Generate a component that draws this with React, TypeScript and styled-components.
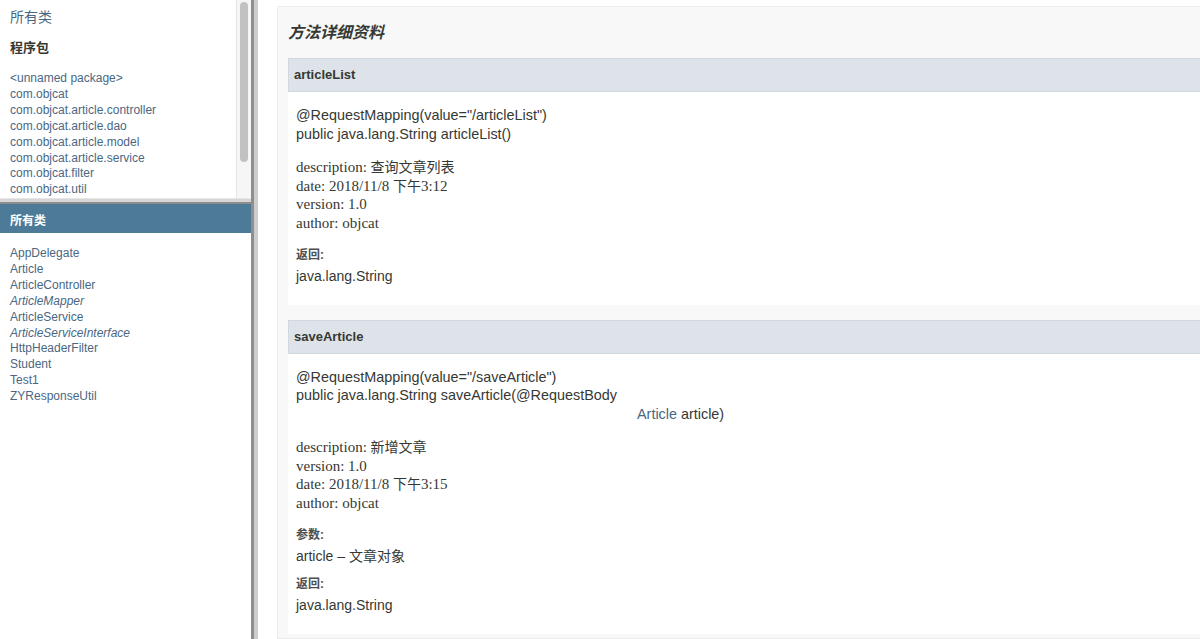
import React from "react";
import styled, { createGlobalStyle } from "styled-components";

const GlobalStyle = createGlobalStyle`
    html, body {
        margin: 0;
        padding: 0;
        background: #ffffff;
        overflow: hidden;
    }
    body {
        font-family: "Liberation Sans", Arial, "Noto Sans CJK SC", sans-serif;
        color: #353833;
        font-size: 14px;
    }
`;

const Page = styled.div`
    display: flex;
    width: 1200px;
    height: 639px;
    overflow: hidden;
`;

const LeftColumn = styled.div`
    width: 251px;
    display: flex;
    flex-direction: column;
    flex-shrink: 0;
`;

const PackageFrame = styled.div`
    height: 198px;
    display: flex;
    overflow: hidden;
`;

const PackageContent = styled.div`
    flex: 1;
    padding: 8px 0 0 10px;
`;

const AllClassesLink = styled.a`
    display: block;
    font-size: 14px;
    line-height: 18px;
    color: #4a6782;
    text-decoration: none;
`;

const IndexTitle = styled.h2`
    margin: 14px 0 0;
    font-size: 13px;
    line-height: 16px;
    font-weight: bold;
    color: #353833;
`;

const LinkList = styled.ul<{ $top: number }>`
    list-style: none;
    margin: ${(p) => p.$top}px 0 0;
    padding: 0;
    font-size: 12px;
    line-height: 15.9px;
`;

const LinkItem = styled.li<{ $italic?: boolean }>`
    color: #4a6782;
    font-style: ${(p) => (p.$italic ? "italic" : "normal")};
    white-space: nowrap;
`;

const ScrollTrack = styled.div`
    width: 15px;
    background: #f6f6f6;
    border-left: 1px solid #e4e4e4;
    box-sizing: border-box;
    display: flex;
    justify-content: center;
    padding-top: 2px;
`;

const ScrollThumb = styled.div`
    width: 8px;
    height: 160px;
    border-radius: 4px;
    background: #c2c2c2;
`;

const HSeparator = styled.div`
    height: 6px;
    box-sizing: border-box;
    background: #d6d6d6;
    border-top: 1px solid #e6e6e6;
    border-bottom: 2px solid #8c8c8c;
`;

const ClassFrame = styled.div`
    flex: 1;
`;

const Bar = styled.h1`
    margin: 0;
    height: 29px;
    box-sizing: border-box;
    padding: 10px 0 0 10px;
    background: #4d7a97;
    color: #ffffff;
    font-size: 12px;
    line-height: 14px;
    font-weight: bold;
`;

const ClassListWrap = styled.div`
    padding-left: 10px;
`;

const VSeparator = styled.div`
    width: 7px;
    flex-shrink: 0;
    box-sizing: border-box;
    background: #cdcdcd;
    border-left: 3px solid #8e8e8e;
`;

const ContentFrame = styled.div`
    flex: 1;
    overflow: hidden;
    padding: 6px 0 0 19px;
    background: #ffffff;
`;

const DetailPanel = styled.div`
    width: calc(100% + 40px);
    box-sizing: border-box;
    background: #f8f8f8;
    border: 1px solid #ededed;
    padding: 16px 0 4px 10px;
`;

const SectionTitle = styled.h3`
    margin: 0 0 15px;
    font-size: 16px;
    line-height: 20px;
    font-style: italic;
    font-weight: bold;
    color: #353833;
`;

const MethodBlock = styled.div`
    background: #ffffff;
    padding: 0 0 20px 8px;
    margin-bottom: 15px;

    &:last-child {
        margin-bottom: 0;
    }
`;

const MethodHeader = styled.h4`
    margin: 0 0 0 -8px;
    padding: 7px 5px;
    background: #dee3e9;
    border: 1px solid #d0d9e0;
    font-size: 13px;
    line-height: 18px;
    font-weight: bold;
    color: #353833;
`;

const Signature = styled.div`
    margin-top: 14px;
    font-size: 14.4px;
    line-height: 18.5px;
    white-space: nowrap;
`;

const ParamLine = styled.div<{ $indent: number }>`
    padding-left: ${(p) => p.$indent}px;
`;

const TypeLink = styled.span`
    color: #4a6782;
`;

const DocBlock = styled.div`
    margin-top: 15px;
    font-family: "Liberation Serif", "Times New Roman", "Noto Sans CJK SC", serif;
    font-size: 15px;
    line-height: 18.67px;
    color: #353833;
`;

const DocLine = styled.div`
    height: 18.67px;
`;

const Han = styled.span`
    font-size: 14px;
    line-height: 1;
`;

const TagList = styled.dl`
    margin: 0;
`;

const TagTerm = styled.dt`
    margin-top: 15px;
    font-size: 12px;
    line-height: 14px;
    font-weight: bold;
    color: #4e4e4e;

    & + dd + & {
        margin-top: 12px;
    }
`;

const TagValue = styled.dd`
    margin: 5px 0 0;
    font-size: 14px;
    line-height: 18px;
`;

const packages = [
    "<unnamed package>",
    "com.objcat",
    "com.objcat.article.controller",
    "com.objcat.article.dao",
    "com.objcat.article.model",
    "com.objcat.article.service",
    "com.objcat.filter",
    "com.objcat.util",
];

const classes: { name: string; iface?: boolean }[] = [
    { name: "AppDelegate" },
    { name: "Article" },
    { name: "ArticleController" },
    { name: "ArticleMapper", iface: true },
    { name: "ArticleService" },
    { name: "ArticleServiceInterface", iface: true },
    { name: "HttpHeaderFilter" },
    { name: "Student" },
    { name: "Test1" },
    { name: "ZYResponseUtil" },
];

const App = () => {
    return (
        <>
            <GlobalStyle />
            <Page>
                <LeftColumn>
                    <PackageFrame>
                        <PackageContent>
                            <AllClassesLink>所有类</AllClassesLink>
                            <IndexTitle>程序包</IndexTitle>
                            <LinkList $top={15}>
                                {packages.map((p) => (
                                    <LinkItem key={p}>{p}</LinkItem>
                                ))}
                            </LinkList>
                        </PackageContent>
                        <ScrollTrack>
                            <ScrollThumb />
                        </ScrollTrack>
                    </PackageFrame>
                    <HSeparator />
                    <ClassFrame>
                        <Bar>所有类</Bar>
                        <ClassListWrap>
                            <LinkList $top={13}>
                                {classes.map((c) => (
                                    <LinkItem key={c.name} $italic={c.iface}>
                                        {c.name}
                                    </LinkItem>
                                ))}
                            </LinkList>
                        </ClassListWrap>
                    </ClassFrame>
                </LeftColumn>

                <VSeparator />

                <ContentFrame>
                    <DetailPanel>
                        <SectionTitle>方法详细资料</SectionTitle>

                        <MethodBlock>
                            <MethodHeader>articleList</MethodHeader>
                            <Signature>
                                <div>@RequestMapping(value="/articleList")</div>
                                <div>public java.lang.String articleList()</div>
                            </Signature>
                            <DocBlock>
                                <DocLine>description: <Han>查询文章列表</Han></DocLine>
                                <DocLine>date: 2018/11/8 <Han>下午</Han>3:12</DocLine>
                                <DocLine>version: 1.0</DocLine>
                                <DocLine>author: objcat</DocLine>
                            </DocBlock>
                            <TagList>
                                <TagTerm>返回:</TagTerm>
                                <TagValue>java.lang.String</TagValue>
                            </TagList>
                        </MethodBlock>

                        <MethodBlock>
                            <MethodHeader>saveArticle</MethodHeader>
                            <Signature>
                                <div>@RequestMapping(value="/saveArticle")</div>
                                <div>public java.lang.String saveArticle(@RequestBody</div>
                                <ParamLine $indent={341}>
                                    <TypeLink>Article</TypeLink> article)
                                </ParamLine>
                            </Signature>
                            <DocBlock>
                                <DocLine>description: <Han>新增文章</Han></DocLine>
                                <DocLine>version: 1.0</DocLine>
                                <DocLine>date: 2018/11/8 <Han>下午</Han>3:15</DocLine>
                                <DocLine>author: objcat</DocLine>
                            </DocBlock>
                            <TagList>
                                <TagTerm>参数:</TagTerm>
                                <TagValue>article – 文章对象</TagValue>
                                <TagTerm>返回:</TagTerm>
                                <TagValue>java.lang.String</TagValue>
                            </TagList>
                        </MethodBlock>
                    </DetailPanel>
                </ContentFrame>
            </Page>
        </>
    );
};

export default App;
